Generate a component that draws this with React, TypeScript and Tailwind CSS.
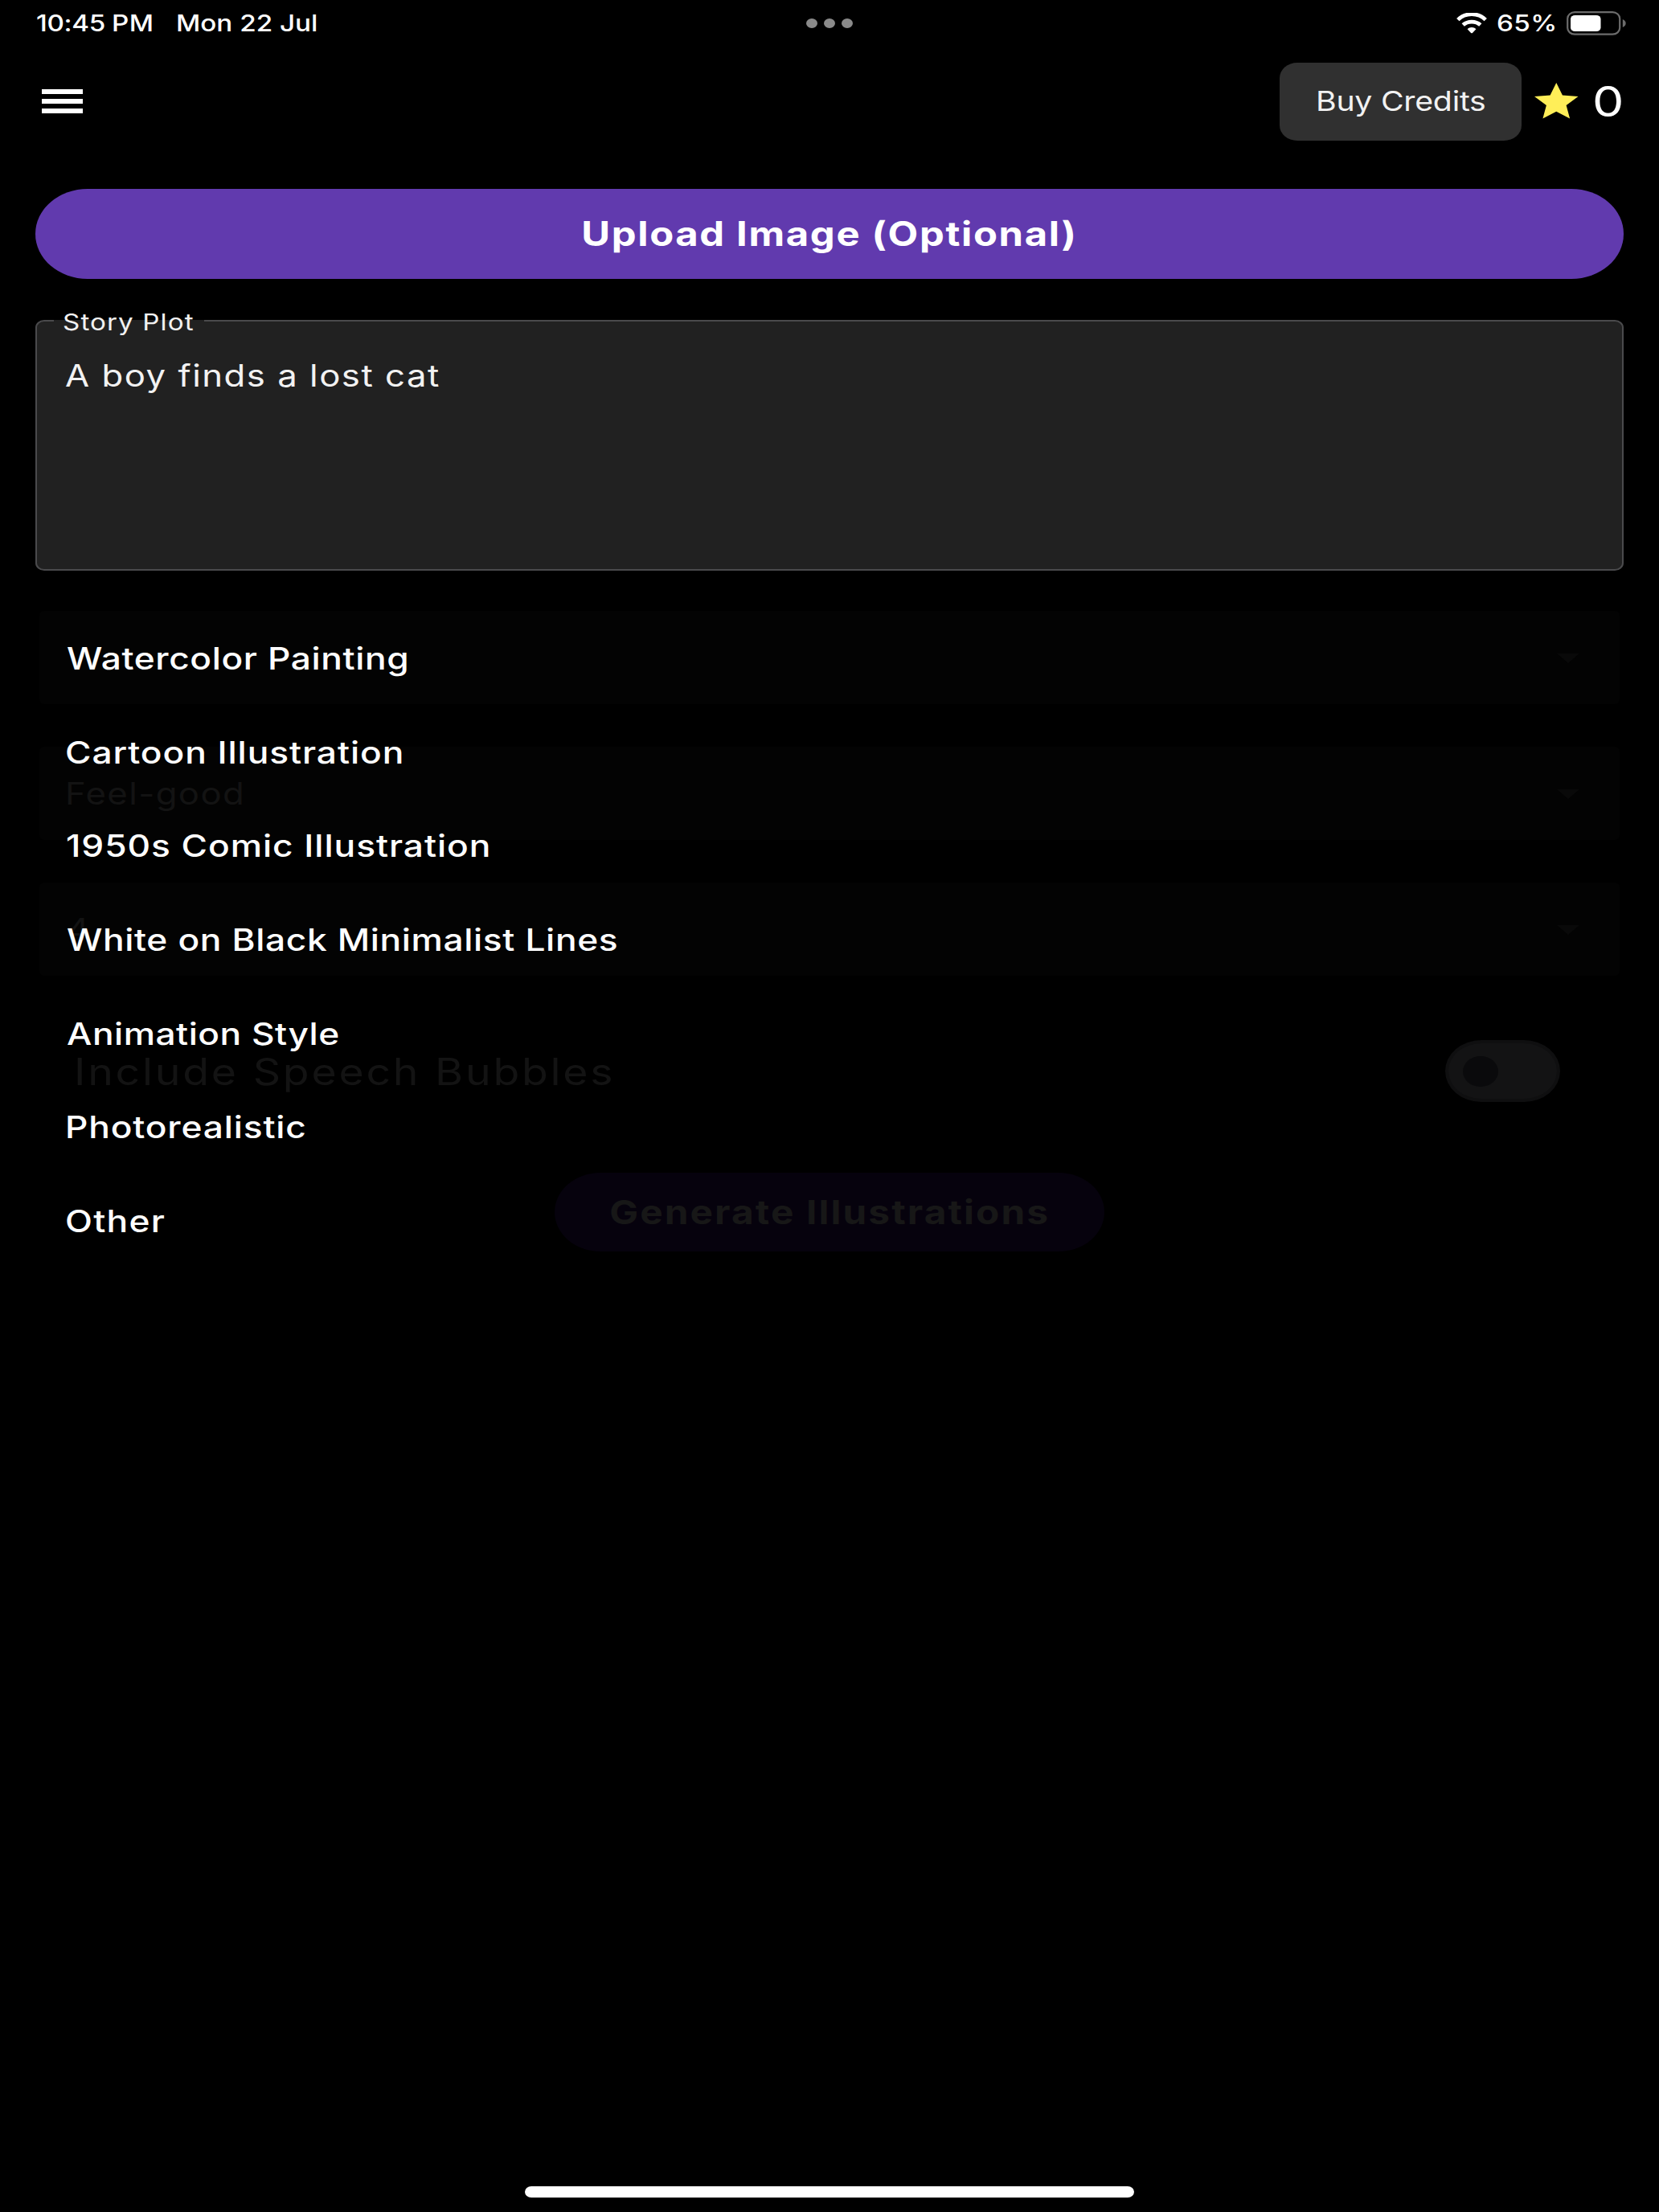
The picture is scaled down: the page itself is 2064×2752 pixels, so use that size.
import type { ReactNode } from "react";

/** Wide-set label: glyphs are stretched horizontally from their left edge. */
function Label({ className = "", children }: { className?: string; children: ReactNode }) {
  return (
    <span className={`inline-block origin-left whitespace-nowrap leading-none ${className}`}>
      {children}
    </span>
  );
}

function WifiIcon() {
  return (
    <svg className="h-[26px] w-[38px]" viewBox="0 0 38 26" fill="none">
      <path d="M1.8 8.6C11 -0.6 27 -0.6 36.2 8.6" stroke="#fff" strokeWidth="4.8" />
      <path d="M8.2 15C14 9.7 24 9.7 29.8 15" stroke="#fff" strokeWidth="4.8" />
      <path d="M13.6 20.2C16.4 17.2 21.6 17.2 24.4 20.2L19.9 24.9C19.4 25.4 18.6 25.4 18.1 24.9Z" fill="#fff" />
    </svg>
  );
}

function BatteryIcon() {
  return (
    <svg className="h-[30px] w-[75px]" viewBox="0 0 75 30" fill="none">
      <rect x="1.2" y="1.2" width="65" height="27.4" rx="9" ry="7.8" stroke="#6c6c6c" strokeWidth="2.2" />
      <rect x="5" y="5" width="37.5" height="20" rx="5.5" ry="4.5" fill="#fff" />
      <path d="M69.8 10C72.2 11 73.7 12.8 73.7 15S72.2 19 69.8 20Z" fill="#6c6c6c" />
    </svg>
  );
}

function StatusBar() {
  return (
    <div className="grid h-[58px] grid-cols-[1fr_auto_1fr] items-center text-[28.5px] font-medium">
      <div className="flex items-center pl-[44.8px]">
        <div className="w-[94px]">
          <Label className="scale-x-[1.165] tracking-[-0.3px]">10:45</Label>
        </div>
        <div className="w-[80px]">
          <Label className="scale-x-[1.165] tracking-[0.4px]">PM</Label>
        </div>
        <Label className="scale-x-[1.165]">Mon 22 Jul</Label>
      </div>
      <div className="flex gap-[7.6px]">
        <span className="h-[12.6px] w-[14.6px] rounded-[50%] bg-[#8a8a8a]" />
        <span className="h-[12.6px] w-[14.6px] rounded-[50%] bg-[#8a8a8a]" />
        <span className="h-[12.6px] w-[14.6px] rounded-[50%] bg-[#8a8a8a]" />
      </div>
      <div className="flex items-center justify-end pr-[40.3px]">
        <WifiIcon />
        <div className="ml-[12px] w-[86.8px]">
          <Label className="scale-x-[1.165] tracking-[0.32px]">65%</Label>
        </div>
        <BatteryIcon />
      </div>
    </div>
  );
}

function Header() {
  return (
    <div className="flex h-[136px] items-center justify-between pr-[45.5px] pl-[52px]">
      <div className="flex w-[51px] flex-col gap-[6.4px]">
        <span className="h-[5.8px] bg-white" />
        <span className="h-[5.8px] bg-white" />
        <span className="h-[5.8px] bg-white" />
      </div>
      <div className="flex items-center">
        <button className="flex h-[97px] w-[301px] items-center rounded-[22px/19px] bg-[#303030] pl-[45px] text-[33.7px] text-[#f2f2f2]">
          <Label className="scale-x-[1.165] tracking-[-0.22px]">Buy Credits</Label>
        </button>
        <svg className="mb-[1px] ml-[16px] h-[44.4px] w-[54.5px]" viewBox="2 2 20 19" preserveAspectRatio="none">
          <path
            d="M12 17.27 18.18 21l-1.64-7.03L22 9.24l-7.19-.61L12 2 9.19 8.63 2 9.24l5.46 4.73L5.82 21z"
            fill="#ffee58"
          />
        </svg>
        <div className="mt-[2px] ml-[17px] flex w-[38px] items-center text-[52px]">
          <Label className="scale-x-[1.2]">0</Label>
        </div>
      </div>
    </div>
  );
}

function StoryPlotField() {
  return (
    <div className="relative mt-[51px] h-[312px] rounded-[11px/9.5px] border-[2.6px] border-[#4a4a4c] bg-[#212121] pt-[49px] pl-[35px]">
      <div className="absolute top-[-2px] left-[21px] flex h-[5px] w-[187px] items-center bg-[#212121] pl-[11px] text-[28.5px]">
        <Label className="scale-x-[1.165] tracking-[0.93px] text-[#f2f2f2]">Story Plot</Label>
      </div>
      <div className="text-[37.5px] leading-none text-[#f2f2f2]">
        <Label className="scale-x-[1.165] tracking-[1.3px]">A boy finds a lost cat</Label>
      </div>
    </div>
  );
}

function Dropdown({ children }: { children?: ReactNode }) {
  return (
    <div className="mx-[5px] flex h-[116px] items-center justify-between rounded-[6px] bg-[#030303] pr-[50px] pl-[31.5px]">
      <div className="flex items-center pt-[1px] text-[37.5px] text-[#131313]">{children}</div>
      <svg className="mt-[2px] h-[12px] w-[28px]" viewBox="0 0 28 12">
        <path d="M0 0H28L14 12Z" fill="#090909" />
      </svg>
    </div>
  );
}

const styles = [
  { name: "Watercolor Painting", look: "ml-[2.5px] tracking-[0.53px]" },
  { name: "Cartoon Illustration", look: "ml-[0.7px] tracking-[0.8px]" },
  { name: "1950s Comic Illustration", look: "ml-[1.5px] tracking-[0.82px]" },
  { name: "White on Black Minimalist Lines", look: "ml-[2.5px] tracking-[0.54px]" },
  { name: "Animation Style", look: "ml-[2.3px] tracking-[0.42px]" },
  { name: "Photorealistic", look: "ml-[0.3px] tracking-[0.72px]" },
  { name: "Other", look: "ml-[0.8px] tracking-[1.1px]" },
];

function StyleMenu() {
  return (
    <ul className="absolute top-[0.6px] left-0 w-full pl-[36.3px]">
      {styles.map((s) => (
        <li key={s.name} className="flex h-[116.6px] items-center text-[38px] font-medium text-white">
          <Label className={`scale-x-[1.165] ${s.look}`}>{s.name}</Label>
        </li>
      ))}
    </ul>
  );
}

export default function App() {
  return (
    <div className="flex h-[2752px] w-[2064px] flex-col overflow-hidden bg-black font-['Inter',sans-serif] text-white">
      <StatusBar />
      <Header />
      <div className="px-[44px] pt-[41.3px]">
        <button className="flex h-[112px] w-full items-center justify-center rounded-[65px/56px] bg-[#613aae] text-[42px] font-bold">
          <span className="inline-block scale-x-[1.165] leading-none tracking-[1.42px] whitespace-nowrap">
            Upload Image (Optional)
          </span>
        </button>
        <StoryPlotField />
        <div className="relative mt-[50px]">
          <div className="flex flex-col gap-[53px]">
            <Dropdown />
            <Dropdown>
              <Label className="scale-x-[1.165] tracking-[1.2px]">Feel-good</Label>
            </Dropdown>
            <Dropdown>
              <Label className="ml-[2px] scale-x-[1.165]">4</Label>
            </Dropdown>
          </div>
          <div className="mt-[80px] flex h-[77px] items-center justify-between pr-[79px] pl-[48px] text-[46px] text-[#131313]">
            <Label className="scale-x-[1.165] tracking-[2.38px]">Include Speech Bubbles</Label>
            <div className="flex h-[77px] w-[143px] items-center rounded-[45px/38.5px] border-[4px] border-[#0f0f10] bg-[#131314] pl-[18px]">
              <span className="h-[38.5px] w-[44px] rounded-[50%] bg-[#0a0a0c]" />
            </div>
          </div>
          <button className="mx-auto mt-[88px] flex h-[98px] w-[684px] items-center justify-center rounded-[57px/49px] bg-[#06020d] text-[41px] font-bold text-[#171717]">
            <span className="inline-block scale-x-[1.165] leading-none tracking-[1.8px] whitespace-nowrap">
              Generate Illustrations
            </span>
          </button>
          <StyleMenu />
        </div>
      </div>
      <div className="mx-auto mt-auto mb-[18px] h-[14px] w-[758px] rounded-[8px/7px] bg-white" />
    </div>
  );
}
